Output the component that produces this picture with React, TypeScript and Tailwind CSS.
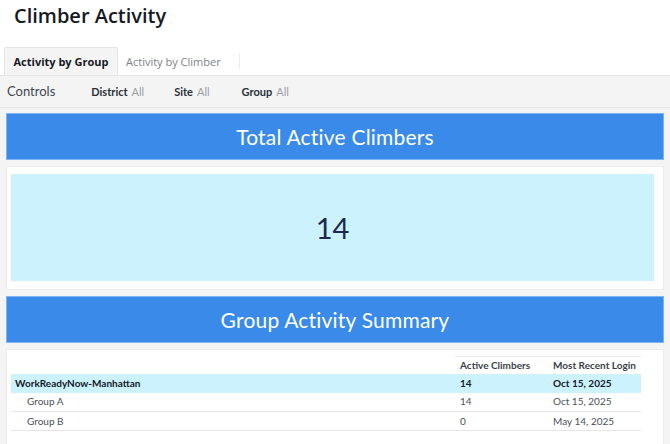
import React from 'react'

const body = { fontFamily: '"Open Sans", "Noto Sans", Arial, sans-serif' }
const heading = { fontFamily: 'Lato, "Open Sans", Arial, sans-serif' }
const compact = { fontFamily: 'Lato, "Liberation Sans", Arial, sans-serif' }

type Row = { name: string; climbers: number; login: string; parent?: boolean }

const rows: Row[] = [
  { name: 'WorkReadyNow-Manhattan', climbers: 14, login: 'Oct 15, 2025', parent: true },
  { name: 'Group A', climbers: 14, login: 'Oct 15, 2025' },
  { name: 'Group B', climbers: 0, login: 'May 14, 2025' },
]

function PanelHeader({ title }: { title: string }) {
  return (
    <div className="flex h-[47px] items-center justify-center border border-[#7fb4f2] bg-[#3a8aea]">
      <span style={heading} className="text-[21px] tracking-[0.2px] text-white">
        {title}
      </span>
    </div>
  )
}

export default function App() {
  return (
    <div style={body} className="h-[444px] w-[670px] overflow-hidden bg-[#f4f4f4] text-[#16191f]">
      {/* Title + tabs */}
      <div className="bg-white">
        <h1 className="px-[14px] pt-[3px] text-[20px] font-semibold leading-[26px] text-[#16191f]">Climber Activity</h1>
        <div className="mt-[18px] flex h-[28px] items-stretch pl-[4px]">
          <div className="flex w-[114px] items-center justify-center rounded-t-[2px] border border-b-0 border-[#e4e4e4] bg-[#f4f4f4] pt-[2px] text-[11px] font-bold">
            Activity by Group
          </div>
          <div className="flex items-center pl-[8px] pr-[18px] pt-[2px] text-[11px] text-[#7d8287]">Activity by Climber</div>
          <div className="my-[6px] w-px bg-[#ececec]" />
        </div>
      </div>

      {/* Controls bar */}
      <div style={compact} className="flex h-[33px] items-center border-y border-[#e6e6e6] bg-[#f4f4f4] pl-[7px] pt-[1px] text-[11px]">
        <span className="text-[13px] text-[#414750]">Controls</span>
        <span className="ml-[36px] font-bold text-[#2b3038]">District</span>
        <span className="ml-[4px] text-[#9a9ea3]">All</span>
        <span className="ml-[30px] font-bold text-[#2b3038]">Site</span>
        <span className="ml-[4px] text-[#9a9ea3]">All</span>
        <span className="ml-[32px] font-bold text-[#2b3038]">Group</span>
        <span className="ml-[4px] text-[#9a9ea3]">All</span>
      </div>

      <div className="flex flex-col gap-[6px] px-[6px] pt-[5px]">
        <PanelHeader title="Total Active Climbers" />

        <div className="border border-[#ececec] bg-white p-[7px_9px_8px_4px]">
          <div className="flex h-[107px] items-center justify-center bg-[#ccf3fd]">
            <span style={heading} className="text-[29px] text-[#1b2a4a]">14</span>
          </div>
        </div>

        <PanelHeader title="Group Activity Summary" />

        <div className="h-[100px] border border-[#ececec] bg-white pl-[4px] pr-[22px] pt-[6px]">
          <table style={compact} className="w-full border-collapse text-[10px]">
            <thead>
              <tr className="h-[17px]">
                <th className="w-[444px]" />
                <th className="w-[93px] border-t border-[#ececec] pl-[5px] text-left font-bold text-[#3a3f47]">Active Climbers</th>
                <th className="border-t border-[#ececec] pl-[5px] text-left font-bold text-[#3a3f47]">Most Recent Login</th>
              </tr>
            </thead>
            <tbody>
              {rows.map(r => (
                <tr
                  key={r.name}
                  className={r.parent ? 'h-[19px] bg-[#ccf3fd] font-bold text-[#16191f]' : 'h-[19px] border-b border-[#e6e6e6] text-[#4b5058]'}
                >
                  <td className={r.parent ? 'pl-[4px]' : 'pl-[16px]'}>{r.name}</td>
                  <td className="pl-[5px]">{r.climbers}</td>
                  <td className="pl-[5px]">{r.login}</td>
                </tr>
              ))}
            </tbody>
          </table>
        </div>
      </div>
    </div>
  )
}
